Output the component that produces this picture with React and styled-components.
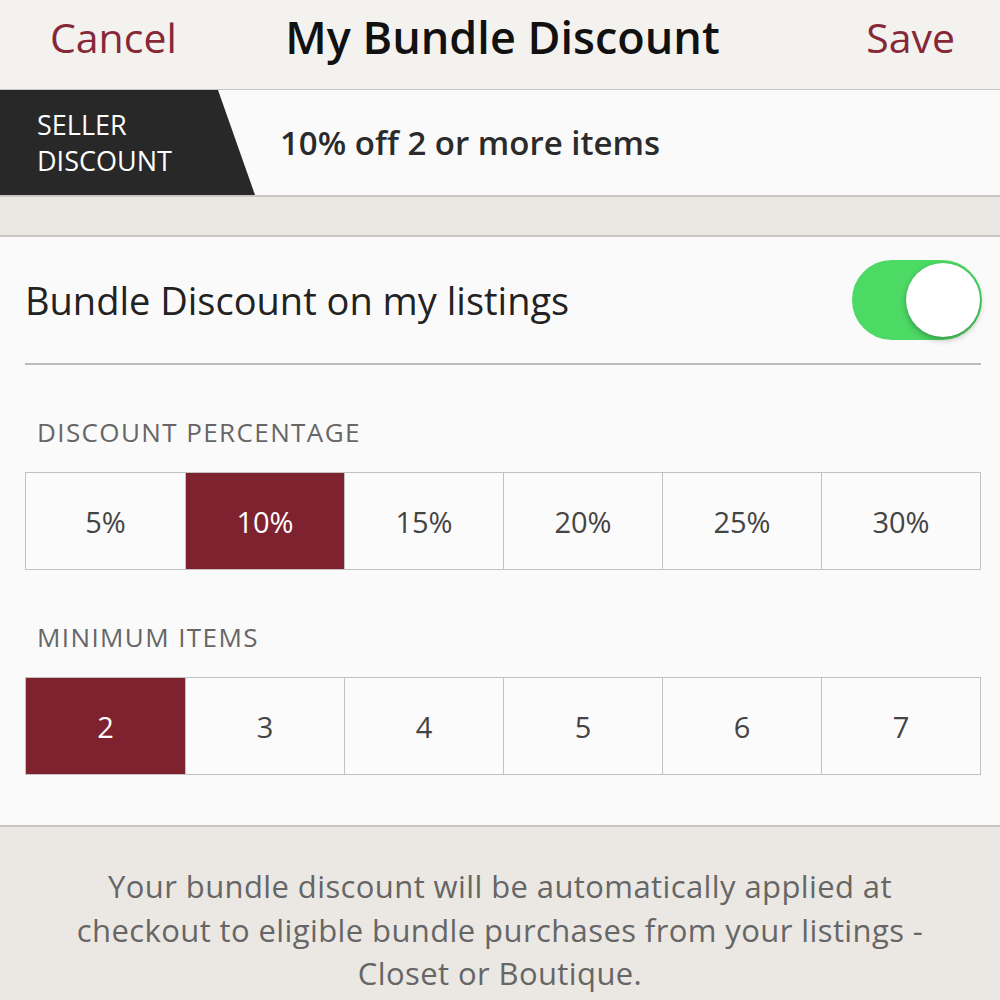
import React, { useState } from "react";
import styled, { createGlobalStyle } from "styled-components";

const GlobalStyle = createGlobalStyle`
  html, body {
    margin: 0;
    padding: 0;
    background: #ebe8e4;
    font-family: "Open Sans", "Lato", sans-serif;
  }
`;

const Page = styled.div`
  width: 1000px;
  height: 1000px;
  overflow: hidden;
  background: #ebe8e4;
  display: flex;
  flex-direction: column;
`;

const NavBar = styled.header`
  height: 90px;
  flex-shrink: 0;
  background: #f4f2ef;
  border-bottom: 1px solid #c9c7c4;
  display: grid;
  grid-template-columns: 1fr auto 1fr;
  align-items: center;
  padding: 0 45px 16px 50px;
  box-sizing: border-box;
`;

const NavLink = styled.button`
  justify-self: ${(p) => (p.$end ? "end" : "start")};
  border: 0;
  background: none;
  padding: 0;
  font-family: inherit;
  font-size: 41px;
  color: #862838;
  cursor: pointer;
`;

const Title = styled.h1`
  margin: 0;
  font-size: 45px;
  font-weight: 600;
  color: #111;
`;

const Banner = styled.div`
  height: 107px;
  flex-shrink: 0;
  background: #fbfafa;
  display: flex;
  align-items: center;
  border-bottom: 2px solid #c8c6c2;
  box-sizing: border-box;
`;

const Tag = styled.div`
  height: 100%;
  width: 255px;
  background: #282828;
  clip-path: polygon(0 0, 218px 0, 255px 100%, 0 100%);
  color: #fff;
  font-size: 27px;
  line-height: 36px;
  padding-left: 37px;
  box-sizing: border-box;
  display: flex;
  flex-direction: column;
  justify-content: center;
`;

const BannerText = styled.div`
  margin-left: 25px;
  font-size: 33px;
  font-weight: 600;
  color: #2b2b2b;
`;

const Gap = styled.div`
  height: 38px;
  flex-shrink: 0;
  border-bottom: 2px solid #c8c6c2;
`;

const Card = styled.section`
  background: #fbfafa;
  padding: 0 19px 0 25px;
  border-bottom: 2px solid #c8c6c2;
  flex-shrink: 0;
`;

const ToggleRow = styled.div`
  height: 126px;
  display: flex;
  align-items: center;
  justify-content: space-between;
  border-bottom: 2px solid #bdbbb9;
`;

const RowLabel = styled.span`
  font-size: 38px;
  color: #222;
`;

const Switch = styled.button`
  width: 130px;
  height: 80px;
  border-radius: 40px;
  border: 2px solid ${(p) => (p.$on ? "#4cd964" : "#e3e3e3")};
  background: ${(p) => (p.$on ? "#4cd964" : "#fff")};
  padding: 0;
  margin-right: -1px;
  display: flex;
  align-items: center;
  justify-content: ${(p) => (p.$on ? "flex-end" : "flex-start")};
  cursor: pointer;
  box-sizing: border-box;
`;

const Knob = styled.span`
  width: 74px;
  height: 74px;
  border-radius: 50%;
  background: #fff;
  box-shadow: 0 3px 6px rgba(0, 0, 0, 0.28), 0 0 1px rgba(0, 0, 0, 0.2);
`;

const SectionLabel = styled.div`
  font-size: 26px;
  letter-spacing: 1.4px;
  color: #666;
  padding: 52px 0 0 12px;
  line-height: 30px;
`;

const Segments = styled.div`
  display: grid;
  grid-template-columns: repeat(6, 1fr);
  margin-top: 25px;
  border: 1px solid #c4c2c0;
  height: 98px;
  box-sizing: border-box;
`;

const Segment = styled.button`
  border: 0;
  border-left: ${(p) => (p.$first ? "0" : "1px solid #c4c2c0")};
  background: ${(p) => (p.$active ? "#7f2230" : "#fcfbfb")};
  color: ${(p) => (p.$active ? "#fff" : "#444")};
  font-family: inherit;
  font-size: 29px;
  padding: 0;
  cursor: pointer;
`;

const CardFoot = styled.div`
  height: 50px;
`;

const Note = styled.p`
  margin: 0;
  padding: 38px 55px 0;
  text-align: center;
  font-size: 31px;
  letter-spacing: 0.4px;
  line-height: 43.5px;
  color: #666;
`;

const percentages = [5, 10, 15, 20, 25, 30];
const counts = [2, 3, 4, 5, 6, 7];

function SegmentRow({ options, value, onPick, suffix = "" }) {
  return (
    <Segments>
      {options.map((o, i) => (
        <Segment
          key={o}
          $first={i === 0}
          $active={o === value}
          onClick={() => onPick(o)}
        >
          {o}
          {suffix}
        </Segment>
      ))}
    </Segments>
  );
}

export default function App() {
  const [on, setOn] = useState(true);
  const [pct, setPct] = useState(10);
  const [min, setMin] = useState(2);

  return (
    <Page>
      <GlobalStyle />
      <NavBar>
        <NavLink>Cancel</NavLink>
        <Title>My Bundle Discount</Title>
        <NavLink $end>Save</NavLink>
      </NavBar>

      <Banner>
        <Tag>
          <span>SELLER</span>
          <span>DISCOUNT</span>
        </Tag>
        <BannerText>
          {pct}% off {min} or more items
        </BannerText>
      </Banner>

      <Gap />

      <Card>
        <ToggleRow>
          <RowLabel>Bundle Discount on my listings</RowLabel>
          <Switch $on={on} onClick={() => setOn(!on)}>
            <Knob />
          </Switch>
        </ToggleRow>

        <SectionLabel>DISCOUNT PERCENTAGE</SectionLabel>
        <SegmentRow options={percentages} value={pct} onPick={setPct} suffix="%" />

        <SectionLabel>MINIMUM ITEMS</SectionLabel>
        <SegmentRow options={counts} value={min} onPick={setMin} />
        <CardFoot />
      </Card>

      <Note>
        Your bundle discount will be automatically applied at checkout to
        eligible bundle purchases from your listings - Closet or Boutique.
      </Note>
    </Page>
  );
}
